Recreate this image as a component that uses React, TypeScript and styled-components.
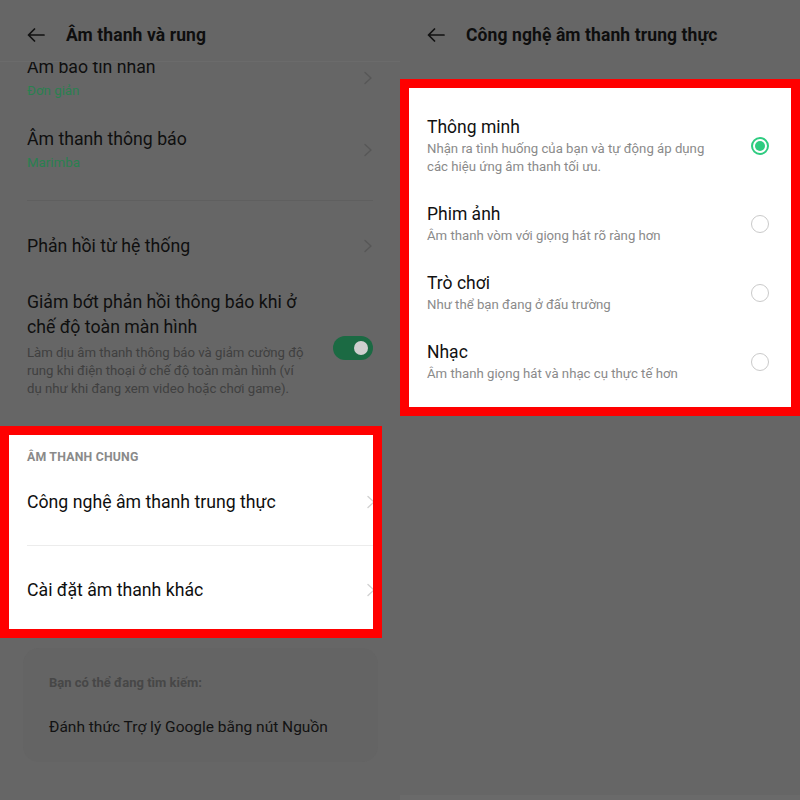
import styled, { createGlobalStyle } from 'styled-components'

const GlobalStyle = createGlobalStyle`
  html, body {
    margin: 0;
    padding: 0;
    background: #666666;
  }
  body {
    font-family: Roboto, 'Noto Sans', 'Liberation Sans', sans-serif;
  }
`

const Page = styled.div`
  display: grid;
  grid-template-columns: 400px 400px;
  width: 800px;
  height: 800px;
  background: #666666;
  overflow: hidden;
`

const Screen = styled.div`
  display: flex;
  flex-direction: column;
  height: 800px;
  overflow: hidden;
`

const Header = styled.div<{ $divider?: boolean }>`
  display: flex;
  align-items: center;
  gap: 21px;
  height: 62px;
  padding: 8px 27px 0;
  box-sizing: border-box;
  flex-shrink: 0;
  border-bottom: 1px solid ${(p) => (p.$divider ? '#6b6b6b' : 'transparent')};
`

const HeaderTitle = styled.div`
  font-size: 17.5px;
  font-weight: 700;
  color: #0e0e0e;
  letter-spacing: 0.1px;
`

const Body = styled.div`
  flex: 1;
  overflow: hidden;
`

// scroll position of the left list: first row is half hidden under the header
const Scroller = styled.div`
  margin-top: -20px;
`

const Row = styled.div<{ $pt?: number; $pb?: number }>`
  display: flex;
  align-items: center;
  gap: 16px;
  padding: ${(p) => p.$pt ?? 12}px 27px ${(p) => p.$pb ?? 12}px;
`

const RowText = styled.div`
  flex: 1;
  min-width: 0;
`

const Title = styled.div`
  font-size: 17.7px;
  line-height: 26px;
  color: #0f0f0f;
`

const WrapTitle = styled(Title)`
  line-height: 25px;
  padding-right: 14px;
`

const Sub = styled.div`
  font-size: 13.3px;
  line-height: 22px;
  color: #2a8050;
`

const Desc = styled.div`
  margin-top: 4px;
  font-size: 13.2px;
  line-height: 18px;
  color: #404040;
  white-space: nowrap;
`

const Divider = styled.div<{ $light?: boolean }>`
  height: 1px;
  margin: ${(p) => (p.$light ? '0 0 0 18px' : '14px 27px 20px')};
  background: ${(p) => (p.$light ? '#ececec' : '#5f5f5f')};
`

const Toggle = styled.div`
  position: relative;
  flex-shrink: 0;
  width: 40px;
  height: 24px;
  border-radius: 12px;
  background: #1b6a43;
  margin-top: 8px;

  &::after {
    content: '';
    position: absolute;
    top: 5px;
    right: 5px;
    width: 14px;
    height: 14px;
    border-radius: 50%;
    background: #cfcfcf;
  }
`

const Highlight = styled.div<{ $side: 'left' | 'right' }>`
  border: 9px solid #ff0000;
  background: #ffffff;
  overflow: hidden;
  ${(p) => (p.$side === 'left' ? 'margin: 16px 18px 0 0;' : 'margin-top: 17px;')}
`

const SectionLabel = styled.div`
  padding: 14px 18px 0;
  font-size: 12.3px;
  line-height: 16px;
  font-weight: 700;
  color: #8a8a8a;
  letter-spacing: 0.2px;
`

const LinkRow = styled.div<{ $pt: number; $pb: number }>`
  display: flex;
  align-items: center;
  padding: ${(p) => p.$pt}px 0 ${(p) => p.$pb}px 18px;
  margin-right: -3px;
`

const SuggestCard = styled.div`
  margin: 10px 22px 0 23px;
  padding: 26px 26px 24px;
  border-radius: 16px;
  background: #646464;
`

const SuggestLabel = styled.div`
  font-size: 13px;
  line-height: 18px;
  font-weight: 700;
  color: #474747;
`

const SuggestItem = styled.div`
  margin-top: 24px;
  font-size: 15.5px;
  line-height: 22px;
  color: #121212;
`

const Options = styled.div`
  padding: 14px 0 11px;
`

const OptionRow = styled.div`
  display: flex;
  align-items: center;
  padding: 14px 22px 13px 18px;
`

const OptionTitle = styled.div`
  font-size: 17.5px;
  line-height: 23px;
  color: #111111;
`

const OptionDesc = styled.div`
  margin-top: 1px;
  font-size: 13.2px;
  line-height: 18px;
  color: #8a8a8a;
`

const Radio = styled.div<{ $on?: boolean }>`
  flex-shrink: 0;
  position: relative;
  width: 18px;
  height: 18px;
  box-sizing: border-box;
  border-radius: 50%;
  border: ${(p) => (p.$on ? '2px solid #2ecc80' : '1.5px solid #cacaca')};

  &::after {
    content: '';
    display: ${(p) => (p.$on ? 'block' : 'none')};
    position: absolute;
    inset: 2px;
    border-radius: 50%;
    background: #2ecc80;
  }
`

const NavStrip = styled.div`
  margin-top: auto;
  height: 5px;
  background: #6a6a6a;
`

const BackArrow = () => (
  <svg width="18" height="14" viewBox="0 0 18 14" fill="none" stroke="#111" strokeWidth="1.7" strokeLinecap="round" strokeLinejoin="round">
    <path d="M17 7H1.5M7.5 1L1.5 7l6 6" />
  </svg>
)

const Chevron = ({ color }: { color: string }) => (
  <svg width="10" height="14" viewBox="0 0 10 14" fill="none" stroke={color} strokeWidth="1.4" strokeLinecap="round" strokeLinejoin="round">
    <path d="M2 1.5L8 7l-6 5.5" />
  </svg>
)

const fullscreenDesc = [
  'Làm dịu âm thanh thông báo và giảm cường độ',
  'rung khi điện thoại ở chế độ toàn màn hình (ví',
  'dụ như khi đang xem video hoặc chơi game).',
]

const options = [
  { title: 'Thông minh', desc: ['Nhận ra tình huống của bạn và tự động áp dụng', 'các hiệu ứng âm thanh tối ưu.'], on: true },
  { title: 'Phim ảnh', desc: ['Âm thanh vòm với giọng hát rõ ràng hơn'] },
  { title: 'Trò chơi', desc: ['Như thể bạn đang ở đấu trường'] },
  { title: 'Nhạc', desc: ['Âm thanh giọng hát và nhạc cụ thực tế hơn'] },
]

const App = () => {
  return (
    <>
      <GlobalStyle />
      <Page>
        <Screen>
          <Header $divider>
            <BackArrow />
            <HeaderTitle>Âm thanh và rung</HeaderTitle>
          </Header>
          <Body>
            <Scroller>
              <Row>
                <RowText>
                  <Title>Âm báo tin nhắn</Title>
                  <Sub>Đơn giản</Sub>
                </RowText>
                <Chevron color="#575757" />
              </Row>
              <Row>
                <RowText>
                  <Title>Âm thanh thông báo</Title>
                  <Sub>Marimba</Sub>
                </RowText>
                <Chevron color="#575757" />
              </Row>
              <Divider />
              <Row>
                <RowText>
                  <Title>Phản hồi từ hệ thống</Title>
                </RowText>
                <Chevron color="#575757" />
              </Row>
              <Row $pt={19}>
                <RowText>
                  <WrapTitle>Giảm bớt phản hồi thông báo khi ở chế độ toàn màn hình</WrapTitle>
                  <Desc>
                    {fullscreenDesc.map((line) => (
                      <div key={line}>{line}</div>
                    ))}
                  </Desc>
                </RowText>
                <Toggle />
              </Row>
            </Scroller>
            <Highlight $side="left">
              <SectionLabel>ÂM THANH CHUNG</SectionLabel>
              <LinkRow $pt={24} $pb={30}>
                <RowText>
                  <Title>Công nghệ âm thanh trung thực</Title>
                </RowText>
                <Chevron color="#d2d2d2" />
              </LinkRow>
              <Divider $light />
              <LinkRow $pt={31} $pb={26}>
                <RowText>
                  <Title>Cài đặt âm thanh khác</Title>
                </RowText>
                <Chevron color="#d2d2d2" />
              </LinkRow>
            </Highlight>
            <SuggestCard>
              <SuggestLabel>Bạn có thể đang tìm kiếm:</SuggestLabel>
              <SuggestItem>Đánh thức Trợ lý Google bằng nút Nguồn</SuggestItem>
            </SuggestCard>
          </Body>
        </Screen>

        <Screen>
          <Header>
            <BackArrow />
            <HeaderTitle>Công nghệ âm thanh trung thực</HeaderTitle>
          </Header>
          <Highlight $side="right">
            <Options>
              {options.map((o) => (
                <OptionRow key={o.title}>
                  <RowText>
                    <OptionTitle>{o.title}</OptionTitle>
                    <OptionDesc>
                      {o.desc.map((line) => (
                        <div key={line}>{line}</div>
                      ))}
                    </OptionDesc>
                  </RowText>
                  <Radio $on={o.on} />
                </OptionRow>
              ))}
            </Options>
          </Highlight>
          <NavStrip />
        </Screen>
      </Page>
    </>
  )
}

export default App
